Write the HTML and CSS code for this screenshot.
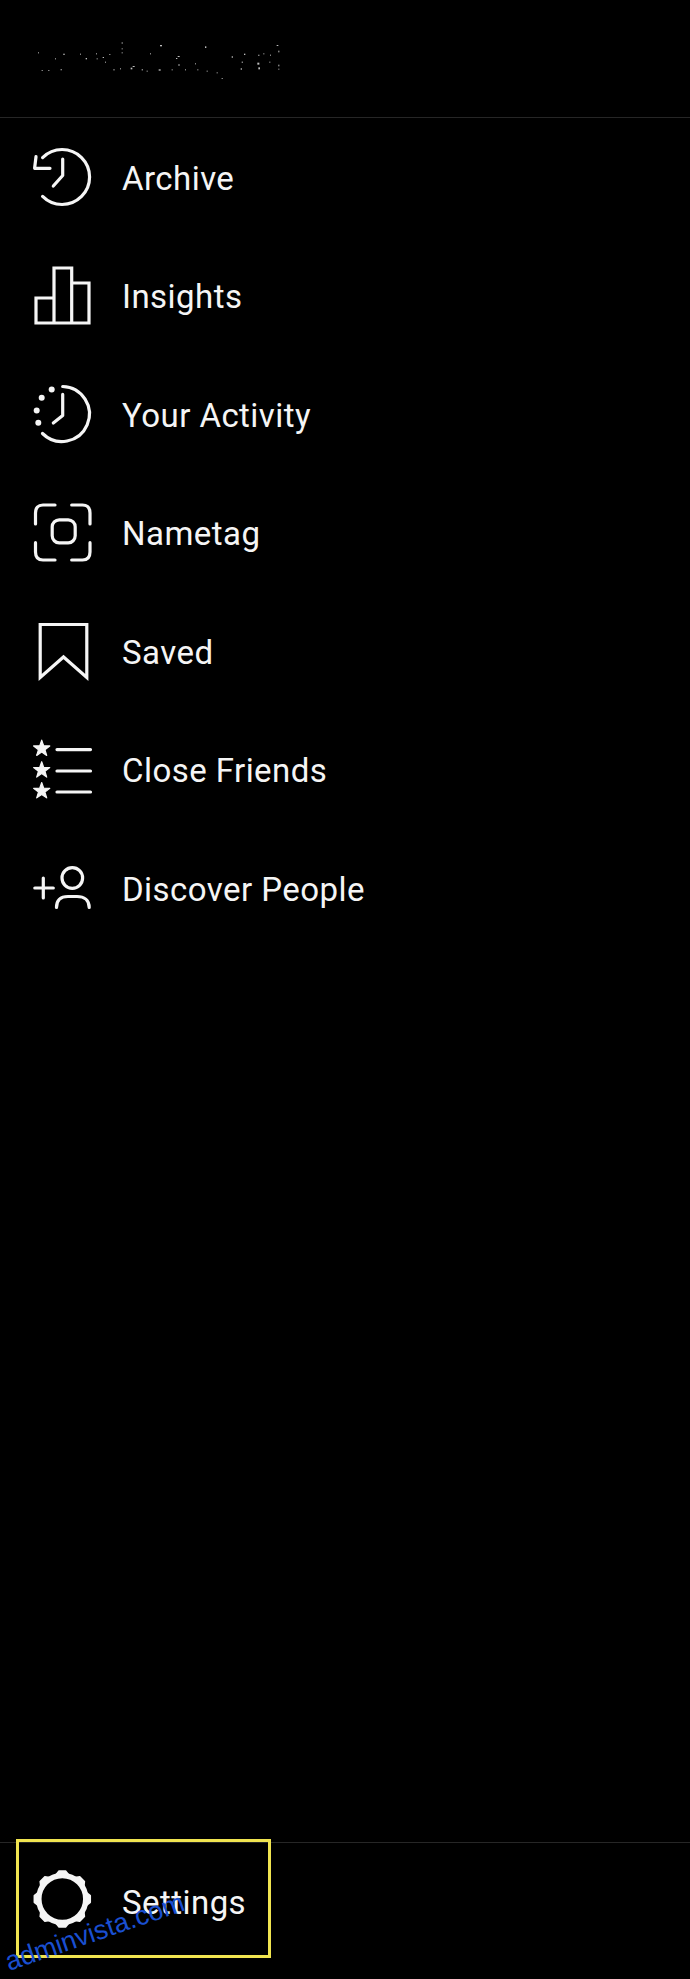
FILE: index.html
```html
<!DOCTYPE html>
<html>

<head>
    <title>Menu</title>
    <link rel="stylesheet" href="styles.css">
</head>

<body>
    <div class="drawer">
        <header class="drawer-head">
            <!-- username is scrubbed in the screenshot, only specks are left -->
            <svg class="specks" viewBox="0 0 810 150" fill="#bdbdbd">
                <rect x="54" y="67" width="3" height="3"/><rect x="130" y="71" width="4" height="4"/>
                <rect x="105" y="85" width="3" height="3"/><rect x="180" y="71" width="3" height="3"/>
                <rect x="197" y="84" width="4" height="4"/><rect x="228" y="70" width="3" height="3"/>
                <rect x="230" y="85" width="3" height="3"/><rect x="248" y="81" width="4" height="3"/>
                <rect x="255" y="95" width="3" height="3"/><rect x="268" y="72" width="3" height="3"/>
                <rect x="305" y="37" width="3" height="4"/><rect x="305" y="55" width="3" height="3"/>
                <rect x="305" y="67" width="3" height="3"/><rect x="420" y="45" width="6" height="4"/>
                <rect x="390" y="70" width="3" height="3"/><rect x="473" y="78" width="6" height="3"/>
                <rect x="468" y="84" width="4" height="3"/><rect x="555" y="49" width="4" height="5"/>
                <rect x="635" y="79" width="4" height="4"/><rect x="672" y="71" width="4" height="4"/>
                <rect x="665" y="95" width="4" height="3"/><rect x="662" y="115" width="4" height="4"/>
                <rect x="715" y="74" width="3" height="4"/><rect x="712" y="98" width="6" height="6"/>
                <rect x="715" y="112" width="5" height="6"/><rect x="730" y="70" width="3" height="3"/>
                <rect x="750" y="74" width="3" height="3"/><rect x="748" y="95" width="3" height="3"/>
                <rect x="770" y="45" width="5" height="3"/><rect x="775" y="62" width="3" height="5"/>
                <rect x="775" y="104" width="3" height="5"/><rect x="775" y="116" width="3" height="3"/>
                <rect x="65" y="120" width="3" height="3"/><rect x="85" y="120" width="3" height="3"/>
                <rect x="122" y="117" width="3" height="4"/><rect x="280" y="118" width="4" height="3"/>
                <rect x="300" y="115" width="3" height="3"/><rect x="332" y="113" width="5" height="5"/>
                <rect x="338" y="108" width="6" height="3"/><rect x="365" y="118" width="4" height="3"/>
                <rect x="380" y="122" width="3" height="3"/><rect x="416" y="118" width="6" height="4"/>
                <rect x="455" y="118" width="3" height="3"/><rect x="475" y="103" width="4" height="4"/>
                <rect x="495" y="118" width="3" height="3"/><rect x="525" y="100" width="3" height="3"/>
                <rect x="532" y="118" width="3" height="3"/><rect x="560" y="122" width="3" height="3"/>
                <rect x="590" y="127" width="3" height="3"/><rect x="605" y="144" width="3" height="3"/>
            </svg>
        </header>

        <nav class="menu">
            <a class="menu-item">
                <svg class="icon" viewBox="0 0 60 60">
                    <path d="M10.6 10.6A27.5 27.5 0 1 1 10.6 49.4"/>
                    <path d="M4 9.7L2.6 21.3H18"/>
                    <path d="M30.7 12V28.5L21.3 39"/>
                </svg>
                <span>Archive</span>
            </a>
            <a class="menu-item">
                <svg class="icon" viewBox="0 0 60 60">
                    <path class="sharp" d="M4 32H22V57H4ZM22 2H39.7V57H22ZM39.7 17H57V57H39.7Z"/>
                </svg>
                <span>Insights</span>
            </a>
            <a class="menu-item">
                <svg class="icon" viewBox="0 0 60 60">
                    <path d="M30.7 2.5A27.5 27.5 0 1 1 10.5 49.5"/>
                    <path d="M30.7 10.4V31.4L21.3 39"/>
                    <circle class="dot" cx="19.7" cy="5.4" r="3"/>
                    <circle class="dot" cx="9.7" cy="13.7" r="3"/>
                    <circle class="dot" cx="4.7" cy="26.4" r="3"/>
                    <circle class="dot" cx="6.3" cy="38.7" r="3"/>
                </svg>
                <span>Your Activity</span>
            </a>
            <a class="menu-item">
                <svg class="icon" viewBox="0 0 60 60">
                    <path d="M3.5 21V10Q3.5 2 11 2H23"/>
                    <path d="M39.7 2H50.5Q58 2 58 10V21"/>
                    <path d="M3.5 39.7V49Q3.5 57 11 57H23"/>
                    <path d="M39.7 57H50.5Q58 57 58 49V39.7"/>
                    <rect x="20.2" y="16.8" width="23" height="23" rx="7"/>
                </svg>
                <span>Nametag</span>
            </a>
            <a class="menu-item">
                <svg class="icon" viewBox="0 0 60 60">
                    <path class="sharp" d="M8.2 56.5V3.5H54.8V56.5L31.5 36Z"/>
                </svg>
                <span>Saved</span>
            </a>
            <a class="menu-item">
                <svg class="icon" viewBox="0 0 60 60">
                    <polygon class="star" transform="translate(9.7 8.6)" points="0,-8.5 2,-2.75 8.08,-2.63 3.23,1.05 5,6.88 0,3.4 -5,6.88 -3.23,1.05 -8.08,-2.63 -2,-2.75"/>
                    <polygon class="star" transform="translate(9.7 30.2)" points="0,-8.5 2,-2.75 8.08,-2.63 3.23,1.05 5,6.88 0,3.4 -5,6.88 -3.23,1.05 -8.08,-2.63 -2,-2.75"/>
                    <polygon class="star" transform="translate(9.7 51)" points="0,-8.5 2,-2.75 8.08,-2.63 3.23,1.05 5,6.88 0,3.4 -5,6.88 -3.23,1.05 -8.08,-2.63 -2,-2.75"/>
                    <path d="M25 9.6H58.5M25 31H58.5M25 52H58.5"/>
                </svg>
                <span>Close Friends</span>
            </a>
            <a class="menu-item">
                <svg class="icon" viewBox="0 0 60 60">
                    <path d="M2.8 30H21.3M11.3 20V40"/>
                    <circle cx="40.3" cy="20" r="10.3"/>
                    <path d="M24.5 49.5C24.5 42 29 38.5 36 38.5H45C52 38.5 57.2 42 57.2 49.5"/>
                </svg>
                <span>Discover People</span>
            </a>
        </nav>

        <footer class="drawer-foot">
            <a class="menu-item">
                <svg class="icon" viewBox="0 0 60 60">
                    <circle class="gear" cx="30.3" cy="27" r="23.5"/>
                    <polygon class="tooth" points="24,2.8 27,-1 33.6,-1 36.6,2.8"/>
                    <polygon class="tooth" points="24,2.8 27,-1 33.6,-1 36.6,2.8" transform="rotate(45 30.3 27)"/>
                    <polygon class="tooth" points="24,2.8 27,-1 33.6,-1 36.6,2.8" transform="rotate(90 30.3 27)"/>
                    <polygon class="tooth" points="24,2.8 27,-1 33.6,-1 36.6,2.8" transform="rotate(135 30.3 27)"/>
                    <polygon class="tooth" points="24,2.8 27,-1 33.6,-1 36.6,2.8" transform="rotate(180 30.3 27)"/>
                    <polygon class="tooth" points="24,2.8 27,-1 33.6,-1 36.6,2.8" transform="rotate(225 30.3 27)"/>
                    <polygon class="tooth" points="24,2.8 27,-1 33.6,-1 36.6,2.8" transform="rotate(270 30.3 27)"/>
                    <polygon class="tooth" points="24,2.8 27,-1 33.6,-1 36.6,2.8" transform="rotate(315 30.3 27)"/>
                </svg>
                <span>Settings</span>
            </a>
        </footer>

        <div class="highlight"></div>
        <div class="watermark">adminvista.com</div>
    </div>
</body>

</html>
```

FILE: styles.css
```css
body {
    font-family: Roboto, "Liberation Sans", sans-serif;
    background-color: #000;
    color: #f5f5f5;
    margin: 0;
    padding: 0;
}

.drawer {
    position: relative;
    display: flex;
    flex-direction: column;
    height: 1979px;
    overflow: hidden;
}

.drawer-head {
    height: 87px;
    padding: 30px 0 0 20px;
    border-bottom: 1px solid #262626;
}

.specks {
    display: block;
    width: 270px;
    height: 50px;
}

.menu-item {
    display: flex;
    align-items: center;
    gap: 30px;
    height: 118.5px;
    padding-left: 32px;
    font-size: 33px;
    letter-spacing: 0.45px;
}

.menu-item span {
    margin-top: 2px;
}

.drawer-foot .menu-item span {
    margin-top: 0;
}

.icon {
    flex: none;
    width: 60px;
    height: 60px;
    overflow: visible;
    fill: none;
    stroke: #f5f5f5;
    stroke-width: 3.2;
    stroke-linecap: round;
    stroke-linejoin: round;
}

.icon .sharp {
    stroke-linejoin: miter;
}

.icon .dot {
    fill: #f5f5f5;
    stroke: none;
}

.icon .star {
    fill: #f5f5f5;
    stroke-width: 1.2;
}

.icon .gear {
    stroke-width: 5.5;
}

.icon .tooth {
    fill: #f5f5f5;
    stroke-width: 1.5;
}

.drawer-foot {
    margin-top: auto;
    height: 136px;
    border-top: 1px solid #262626;
}

.highlight {
    position: absolute;
    left: 16px;
    top: 1839px;
    width: 249px;
    height: 113px;
    border: 3px solid #f0e450;
}

.watermark {
    position: absolute;
    left: 9px;
    top: 1950px;
    font-family: "Liberation Sans", sans-serif;
    font-size: 27px;
    line-height: 24px;
    color: #1a4fd0;
    transform: rotate(-19deg);
    transform-origin: 0 21px;
}
```
